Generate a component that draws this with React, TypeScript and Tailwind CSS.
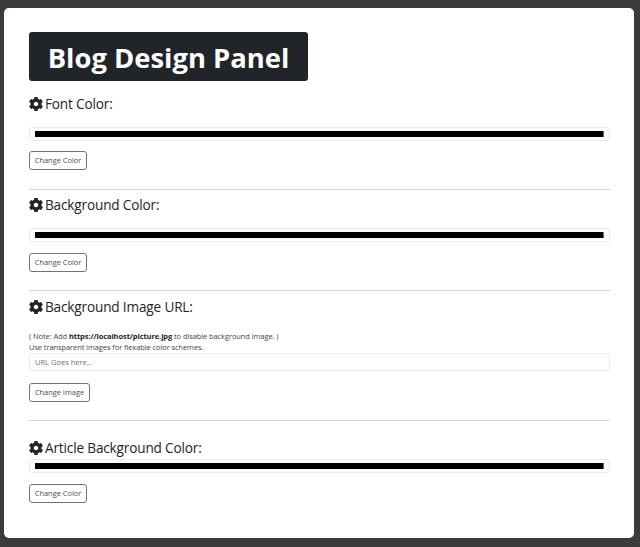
const font = "font-['Open_Sans','Noto_Sans',sans-serif]";

function Gear() {
  return (
    <svg viewBox="16 12 480 488" className="w-[14px] h-[14px] shrink-0" fill="#212529">
      <path d="M487.4 315.7l-42.6-24.6c4.3-23.2 4.3-47 0-70.2l42.6-24.6c4.9-2.8 7.1-8.6 5.5-14-11.1-35.6-30-67.8-54.7-94.6-3.8-4.1-10-5.1-14.8-2.3L380.8 110c-17.9-15.4-38.5-27.3-60.8-35.1V25.8c0-5.6-3.9-10.5-9.4-11.7-36.7-8.2-74.3-7.8-109.2 0-5.5 1.2-9.4 6.1-9.4 11.7V75c-22.2 7.9-42.8 19.8-60.8 35.1L88.7 85.5c-4.9-2.8-11-1.9-14.8 2.3-24.7 26.7-43.6 58.9-54.7 94.6-1.7 5.4.6 11.2 5.5 14L67.3 221c-4.3 23.2-4.3 47 0 70.2l-42.6 24.6c-4.9 2.8-7.1 8.6-5.5 14 11.1 35.6 30 67.8 54.7 94.6 3.8 4.1 10 5.1 14.8 2.3l42.6-24.6c17.9 15.4 38.5 27.3 60.8 35.1v49.2c0 5.6 3.9 10.5 9.4 11.7 36.7 8.2 74.3 7.8 109.2 0 5.5-1.2 9.4-6.1 9.4-11.7v-49.2c22.2-7.9 42.8-19.8 60.8-35.1l42.6 24.6c4.9 2.8 11 1.9 14.8-2.3 24.7-26.7 43.6-58.9 54.7-94.6 1.5-5.5-.7-11.3-5.6-14.1zM256 336c-44.1 0-80-35.9-80-80s35.9-80 80-80 80 35.9 80 80-35.9 80-80 80z" />
    </svg>
  );
}

function Heading({ children, className = "" }: { children: string; className?: string }) {
  return (
    <div className={`flex items-center gap-[2px] text-[13.6px] leading-[20px] tracking-[-0.16px] text-[#212529] ${className}`}>
      <Gear />
      <span>{children}</span>
    </div>
  );
}

function ColorBar({ className = "" }: { className?: string }) {
  return (
    <div className={`h-[14px] rounded-[3px] border border-[#e9ecef] bg-white px-[5px] py-[2px] flex items-center ${className}`}>
      <div className="h-[6px] w-full bg-black border-r border-[#666]" />
    </div>
  );
}

function Btn({ children, className = "" }: { children: string; className?: string }) {
  return (
    <button className={`block h-[19px] whitespace-nowrap rounded-[3px] border border-[#6c757d] bg-white p-0 text-center text-[7.5px] tracking-[-0.05px] leading-[17px] text-[#495057] ${className}`}>
      {children}
    </button>
  );
}

function Rule({ className = "" }: { className?: string }) {
  return <hr className={`border-0 h-px bg-[#d6d6d6] ${className}`} />;
}

export default function App() {
  return (
    <div className={`${font} h-[547px] w-[640px] overflow-hidden bg-[#3b3b3b] pt-[8px] pl-[4px] pr-[6px]`}>
      <div className="h-[530px] rounded-[5px] bg-white pt-[24px] pl-[25px] pr-[24px]">
        <div className="flex h-[49px] w-[279px] items-center justify-center rounded-[3px] bg-[#212529] pt-[2px] text-[27.4px] font-bold leading-none text-white">
          Blog Design Panel
        </div>

        <Heading className="mt-[13px]">Font Color:</Heading>
        <ColorBar className="mt-[13px]" />
        <Btn className="mt-[10px] w-[58px]">Change Color</Btn>
        <Rule className="mt-[19px]" />

        <Heading className="mt-[5px]">Background Color:</Heading>
        <ColorBar className="mt-[13px]" />
        <Btn className="mt-[11px] w-[58px]">Change Color</Btn>
        <Rule className="mt-[18px]" />

        <Heading className="mt-[6px]">Background Image URL:</Heading>
        <div className="mt-[14px] text-[7.5px] tracking-[-0.09px] leading-[11px] text-[#3f444a]">
          <div>( Note: Add <b className="text-[#212529]">https://localhost/picture.jpg</b> to disable background image. )</div>
          <div>Use transparent images for flexable color schemes.</div>
        </div>
        <input
          readOnly
          placeholder="URL Goes here..."
          className="block h-[18px] w-full rounded-[3px] border border-[#e9ecef] bg-white px-[5px] text-[7.5px] placeholder:text-[#6c757d] outline-none"
        />
        <Btn className="mt-[12px] w-[61px]">Change Image</Btn>
        <Rule className="mt-[18px]" />

        <Heading className="mt-[17px]">Article Background Color:</Heading>
        <ColorBar className="mt-[1px]" />
        <Btn className="mt-[11px] w-[58px]">Change Color</Btn>
      </div>
    </div>
  );
}
